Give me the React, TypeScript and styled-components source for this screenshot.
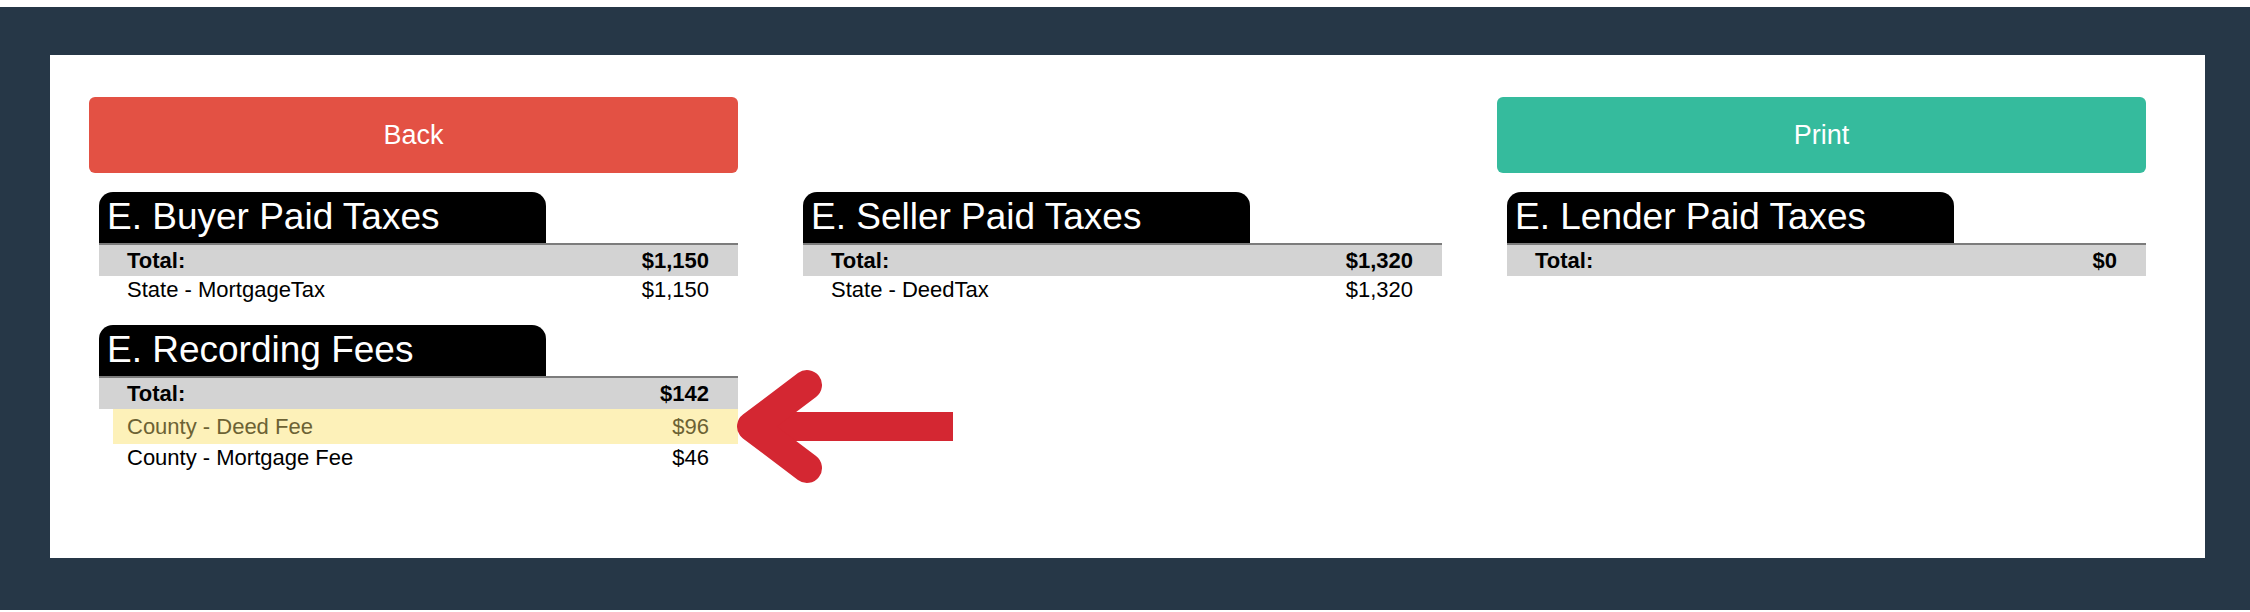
import React from "react";
import styled, { createGlobalStyle } from "styled-components";

const GlobalStyle = createGlobalStyle`
  html, body {
    margin: 0;
    padding: 0;
    background: #ffffff;
  }

  body {
    font-family: "Liberation Sans", Arial, Helvetica, sans-serif;
    color: #000;
  }
`;

const Frame = styled.div`
  margin-top: 7px;
  height: 603px;
  box-sizing: border-box;
  padding: 48px 45px 52px 50px;
  background-color: #263747;
`;

const Panel = styled.div`
  height: 100%;
  box-sizing: border-box;
  padding: 42px 59px 0 39px;
  background-color: #ffffff;
`;

const Grid = styled.div`
  display: grid;
  grid-template-columns: repeat(3, 649px);
  column-gap: 55px;
  row-gap: 19px;
  align-items: start;
`;

const ActionButton = styled.button<{ $variant: "back" | "print" }>`
  height: 76px;
  border: none;
  border-radius: 6px;
  cursor: pointer;
  font-family: inherit;
  font-size: 27px;
  color: #ffffff;
  background-color: ${({ $variant }) => ($variant === "back" ? "#e35144" : "#35bb9d")};
  grid-column: ${({ $variant }) => ($variant === "back" ? "1" : "3")};
`;

const Column = styled.div`
  display: flex;
  flex-direction: column;
  gap: 21px;
`;

const Block = styled.section`
  position: relative;
  margin-left: 10px;
`;

const BlockTitle = styled.h2`
  margin: 0;
  width: 70%;
  height: 51px;
  box-sizing: border-box;
  padding: 0 0 0 8px;
  border-radius: 14px 14px 0 0;
  background-color: #000000;
  color: #ffffff;
  font-size: 37px;
  font-weight: 400;
  line-height: 49px;
  white-space: nowrap;
`;

const TotalRow = styled.div`
  display: flex;
  justify-content: space-between;
  align-items: center;
  height: 33px;
  box-sizing: border-box;
  padding: 0 29px 0 28px;
  border-top: 2px solid #7c7c7c;
  background-color: #d3d3d3;
  font-size: 22px;
  font-weight: 700;
`;

const ItemRow = styled.div<{ $highlight?: boolean }>`
  display: flex;
  justify-content: space-between;
  align-items: center;
  height: ${({ $highlight }) => ($highlight ? "35px" : "28px")};
  margin-left: 14px;
  padding: 0 29px 0 14px;
  font-size: 22px;
  background-color: ${({ $highlight }) => ($highlight ? "#fdf1b9" : "transparent")};
  color: ${({ $highlight }) => ($highlight ? "#6c6234" : "#000000")};
`;

const Pointer = styled.svg`
  position: absolute;
  left: calc(100% - 1px);
  top: 43px;
  width: 218px;
  height: 117px;
  overflow: visible;
`;

type Item = { label: string; amount: string; highlight?: boolean };

type FeeTableProps = {
  title: string;
  total: string;
  items: Item[];
  pointed?: boolean;
};

const Arrow = () => (
  <Pointer viewBox="0 0 218 117">
    <line x1="30" y1="58.5" x2="216" y2="58.5" stroke="#d42732" strokeWidth="29" />
    <polyline
      points="70,17 15,58.5 70,100"
      fill="none"
      stroke="#d42732"
      strokeWidth="30"
      strokeLinecap="round"
      strokeLinejoin="round"
    />
  </Pointer>
);

const FeeTable = ({ title, total, items, pointed }: FeeTableProps) => (
  <Block>
    <BlockTitle>{title}</BlockTitle>
    <TotalRow>
      <span>Total:</span>
      <span>{total}</span>
    </TotalRow>
    {items.map((item) => (
      <ItemRow key={item.label} $highlight={item.highlight}>
        <span>{item.label}</span>
        <span>{item.amount}</span>
      </ItemRow>
    ))}
    {pointed && <Arrow />}
  </Block>
);

export default function App() {
  return (
    <>
      <GlobalStyle />
      <Frame>
        <Panel>
          <Grid>
            <ActionButton $variant="back">Back</ActionButton>
            <ActionButton $variant="print">Print</ActionButton>

            <Column>
              <FeeTable
                title="E. Buyer Paid Taxes"
                total="$1,150"
                items={[{ label: "State - MortgageTax", amount: "$1,150" }]}
              />
              <FeeTable
                title="E. Recording Fees"
                total="$142"
                pointed
                items={[
                  { label: "County - Deed Fee", amount: "$96", highlight: true },
                  { label: "County - Mortgage Fee", amount: "$46" },
                ]}
              />
            </Column>
            <Column>
              <FeeTable
                title="E. Seller Paid Taxes"
                total="$1,320"
                items={[{ label: "State - DeedTax", amount: "$1,320" }]}
              />
            </Column>
            <Column>
              <FeeTable title="E. Lender Paid Taxes" total="$0" items={[]} />
            </Column>
          </Grid>
        </Panel>
      </Frame>
    </>
  );
}
